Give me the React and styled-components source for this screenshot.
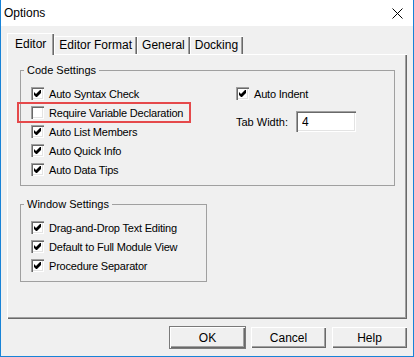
import React from "react";
import styled, { createGlobalStyle } from "styled-components";

const GlobalStyle = createGlobalStyle`
  html, body {
    margin: 0;
    padding: 0;
    background: #ffffff;
  }
  body {
    font-family: "Liberation Sans", Arial, sans-serif;
    color: #000;
  }
`;

// window frame
const Window = styled.div`
  width: 414px;
  height: 357px;
  box-sizing: border-box;
  border: 1px solid #1883d7;
  border-top: none;
  background: #f0f0f0;
  display: flex;
  flex-direction: column;
`;

const TitleBar = styled.div`
  height: 26px;
  flex: none;
  background: #fff;
  display: flex;
  align-items: center;
  justify-content: space-between;
  padding: 0 10px 0 3px;
  font-size: 12px;
`;

const Body = styled.div`
  padding: 7px 6px 0 6px;
  display: flex;
  flex-direction: column;
`;

// tabs
const TabRow = styled.div`
  display: flex;
  align-items: flex-end;
  height: 21px;
`;

const Tab = styled.div`
  position: relative;
  z-index: ${(p) => (p.$active ? 1 : 0)};
  height: ${(p) => (p.$active ? 22 : 18)}px;
  margin-bottom: ${(p) => (p.$active ? -1 : 0)}px;
  padding: 0 ${(p) => (p.$active ? 8 : 5)}px;
  display: flex;
  align-items: center;
  box-sizing: border-box;
  background: #f0f0f0;
  font-size: 12px;
  box-shadow: inset 1px 1px 0 #fff, inset -1px 0 0 #696969,
    inset -2px 0 0 #a0a0a0;
`;

const Panel = styled.div`
  width: 400px;
  height: 265px;
  box-sizing: border-box;
  padding: 9px 13px;
  display: flex;
  flex-direction: column;
  gap: 11px;
  box-shadow: inset 1px 1px 0 #fff, inset -1px -1px 0 #696969,
    inset -2px -2px 0 #a0a0a0;
`;

// group boxes
const Group = styled.fieldset`
  margin: 0;
  width: ${(p) => p.$width}px;
  box-sizing: border-box;
  padding: 7px 10px 6px;
  border: 1px solid #a0a0a0;
  min-inline-size: 0;
`;

const Legend = styled.legend`
  font-size: 11px;
  line-height: 14px;
  padding: 0 3px;
  margin-left: -7px;
`;

const Columns = styled.div`
  display: grid;
  grid-template-columns: 205px 1fr;
`;

const Stack = styled.div`
  display: flex;
  flex-direction: column;
`;

const CheckRow = styled.label`
  position: relative;
  height: 19px;
  display: flex;
  align-items: center;
  gap: 5px;
  font-size: 11px;
  letter-spacing: -0.2px;
  white-space: nowrap;

  ${(p) =>
    p.$highlight &&
    `
    &::after {
      content: "";
      position: absolute;
      left: -14px;
      top: -1px;
      width: 174px;
      height: 21px;
      box-sizing: border-box;
      border: 2px solid #e5494b;
    }
  `}
`;

const Box = styled.span`
  width: 13px;
  height: 13px;
  flex: none;
  background: #fff;
  box-shadow: inset 1px 1px 0 #a0a0a0, inset 2px 2px 0 #696969,
    inset -1px -1px 0 #fff, inset -2px -2px 0 #e3e3e3;
  display: flex;
`;

const FieldRow = styled.div`
  margin-top: 8px;
  display: flex;
  align-items: center;
  font-size: 11px;
`;

const NumInput = styled.input`
  margin-left: 8px;
  width: 60px;
  height: 21px;
  box-sizing: border-box;
  border: none;
  outline: none;
  padding: 0 0 0 6px;
  font-family: "Liberation Sans", Arial, sans-serif;
  font-size: 12px;
  color: #000;
  background: #fff;
  box-shadow: inset 1px 1px 0 #a0a0a0, inset 2px 2px 0 #696969,
    inset -1px -1px 0 #fff, inset -2px -2px 0 #e3e3e3;
`;

// bottom buttons
const ButtonBar = styled.div`
  margin-top: 8px;
  display: flex;
  justify-content: flex-end;
  gap: 6px;
`;

const Button = styled.button`
  width: 75px;
  height: 21px;
  padding: 0;
  border: none;
  background: #f0f0f0;
  font-family: "Liberation Sans", Arial, sans-serif;
  font-size: 12px;
  color: #000;
  box-shadow: inset 1px 1px 0 #fff, inset -1px -1px 0 #696969,
    inset -2px -2px 0 #a0a0a0
    ${(p) => (p.$default ? ", 0 0 0 1px #7a7a7a" : "")};
`;

function CloseIcon() {
  return (
    <svg width="11" height="11" viewBox="0 0 11 11">
      <path d="M0.5 0.5 L10.5 10.5 M10.5 0.5 L0.5 10.5" stroke="#000" strokeWidth="1" fill="none" />
    </svg>
  );
}

function Check({ checked, label, highlight }) {
  return (
    <CheckRow $highlight={highlight}>
      <Box>
        {checked && (
          <svg width="13" height="13" viewBox="0 0 13 13">
            <polygon points="3,5 5,7 9,3 10,3 10,6 6,10 5,10 3,8" fill="#000" />
          </svg>
        )}
      </Box>
      {label}
    </CheckRow>
  );
}

export default function App() {
  return (
    <>
      <GlobalStyle />
      <Window>
        <TitleBar>
          <span>Options</span>
          <CloseIcon />
        </TitleBar>
        <Body>
          <TabRow>
            <Tab $active>Editor</Tab>
            <Tab>Editor Format</Tab>
            <Tab>General</Tab>
            <Tab>Docking</Tab>
          </TabRow>
          <Panel>
            <Group $width={375}>
              <Legend>Code Settings</Legend>
              <Columns>
                <Stack>
                  <Check checked label="Auto Syntax Check" />
                  <Check label="Require Variable Declaration" highlight />
                  <Check checked label="Auto List Members" />
                  <Check checked label="Auto Quick Info" />
                  <Check checked label="Auto Data Tips" />
                </Stack>
                <Stack>
                  <Check checked label="Auto Indent" />
                  <FieldRow>
                    Tab Width:
                    <NumInput defaultValue="4" />
                  </FieldRow>
                </Stack>
              </Columns>
            </Group>
            <Group $width={187}>
              <Legend>Window Settings</Legend>
              <Stack>
                <Check checked label="Drag-and-Drop Text Editing" />
                <Check checked label="Default to Full Module View" />
                <Check checked label="Procedure Separator" />
              </Stack>
            </Group>
          </Panel>
          <ButtonBar>
            <Button $default>OK</Button>
            <Button>Cancel</Button>
            <Button>Help</Button>
          </ButtonBar>
        </Body>
      </Window>
    </>
  );
}
